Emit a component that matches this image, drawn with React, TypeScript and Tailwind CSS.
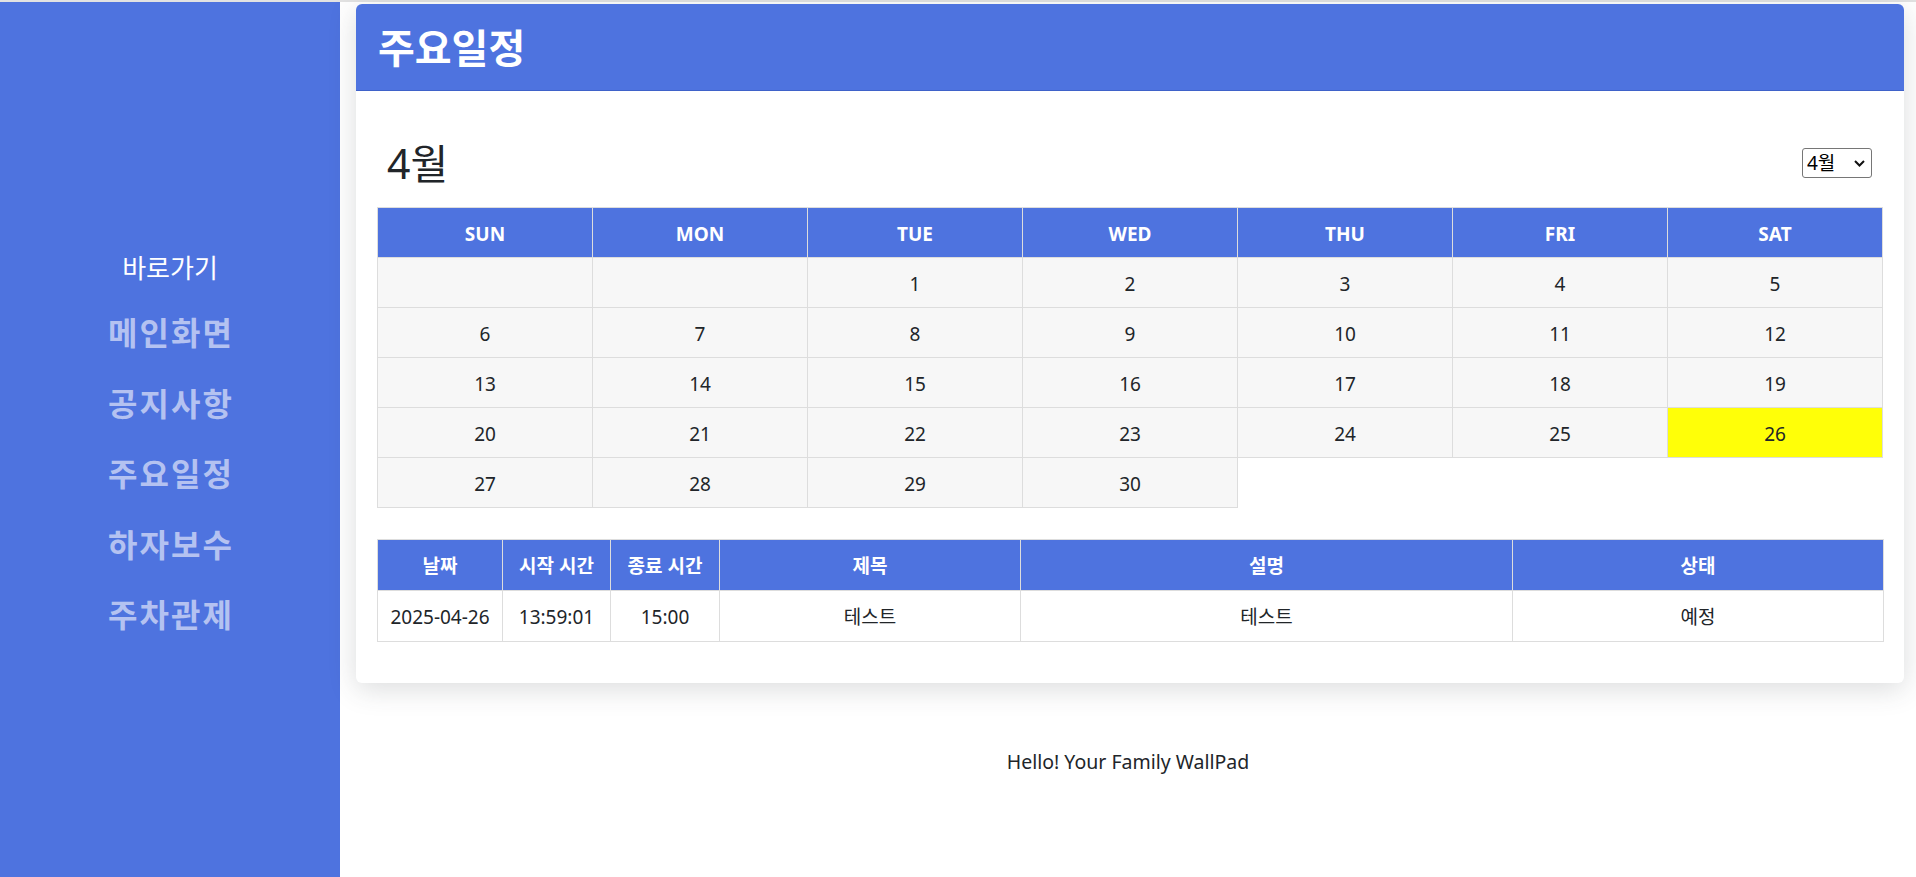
import React from "react";

const weeks: (number | null)[][] = [
  [null, null, 1, 2, 3, 4, 5],
  [6, 7, 8, 9, 10, 11, 12],
  [13, 14, 15, 16, 17, 18, 19],
  [20, 21, 22, 23, 24, 25, 26],
  [27, 28, 29, 30],
];

const days = ["SUN", "MON", "TUE", "WED", "THU", "FRI", "SAT"];

const menu = ["메인화면", "공지사항", "주요일정", "하자보수", "주차관제"];

export default function App() {
  return (
    <div
      className="w-[1916px] h-[877px] bg-white text-[#212529] overflow-hidden flex flex-col"
      style={{ fontFamily: '"Noto Sans", "Noto Sans CJK KR", sans-serif' }}
    >
      <div className="h-[2px] w-full bg-[#e2e2e2] shrink-0" />
      <div className="flex flex-1 min-h-0">
        {/* Sidebar */}
        <aside className="w-[340px] shrink-0 bg-[#4e73df] flex flex-col items-center pt-[251px]">
          <div className="h-[30px] flex items-center text-white text-[26px] leading-none">
            바로가기
          </div>
          <nav className="mt-[15px] flex flex-col items-center">
            {menu.map((m) => (
              <div
                key={m}
                className="h-[70.5px] flex items-center text-[32px] font-bold text-[#b4c2f1] tracking-[2px] leading-none pl-[2px]"
              >
                {m}
              </div>
            ))}
          </nav>
        </aside>

        {/* Main */}
        <main className="flex-1 flex flex-col">
          <section className="ml-[16px] mt-[2px] w-[1548px] bg-white rounded-[6px] shadow-[0_6px_28px_rgba(58,59,69,0.18)]">
            <header className="h-[87px] bg-[#4e73df] rounded-t-[6px] border-b border-[#3f62c9] flex items-center pl-[22px]">
              <h1 className="text-white text-[40px] font-bold leading-none pt-[2px]">주요일정</h1>
            </header>
            <div className="px-[21px] pt-[42px] pb-[41px]">
              <div className="h-[60px] flex items-center justify-between">
                <h2 className="text-[41px] leading-none pl-[10px] text-[#212529]">4월</h2>
                <div className="relative mr-[11px]">
                  <select
                    defaultValue="4"
                    className="appearance-none w-[70px] h-[30px] border border-[#767676] rounded-[3px] bg-white text-[19px] leading-none pl-[4px] text-black"
                  >
                    <option value="4">4월</option>
                  </select>
                  <svg
                    className="absolute right-[7px] top-[12px] pointer-events-none"
                    width="11"
                    height="7"
                    viewBox="0 0 11 7"
                    fill="none"
                  >
                    <path d="M1 1l4.5 4.5L10 1" stroke="#111" strokeWidth="2" />
                  </svg>
                </div>
              </div>

              <table className="mt-[14px] w-[1506px] table-fixed border-collapse">
                <thead>
                  <tr>
                    {days.map((d) => (
                      <th
                        key={d}
                        className="h-[50px] p-0 pt-[3px] bg-[#4e73df] text-white font-bold text-[19px] border border-[#dddddd]"
                      >
                        {d}
                      </th>
                    ))}
                  </tr>
                </thead>
                <tbody>
                  {weeks.map((w, i) => (
                    <tr key={i}>
                      {w.map((n, j) => (
                        <td
                          key={j}
                          className={
                            "h-[50px] p-0 pt-[3px] text-center text-[19px] border border-[#dddddd] " +
                            (n === 26 ? "bg-[#ffff08]" : "bg-[#f7f7f7]")
                          }
                        >
                          {n ?? ""}
                        </td>
                      ))}
                    </tr>
                  ))}
                </tbody>
              </table>

              <table className="mt-[31px] w-[1506px] table-fixed border-collapse">
                <colgroup>
                  <col className="w-[125px]" />
                  <col className="w-[108px]" />
                  <col className="w-[109px]" />
                  <col className="w-[301px]" />
                  <col className="w-[492px]" />
                  <col className="w-[371px]" />
                </colgroup>
                <thead>
                  <tr>
                    {["날짜", "시작 시간", "종료 시간", "제목", "설명", "상태"].map((h) => (
                      <th
                        key={h}
                        className="h-[51px] p-0 pt-[2px] bg-[#4e73df] text-white font-bold text-[19px] border border-[#dddddd] whitespace-nowrap"
                      >
                        {h}
                      </th>
                    ))}
                  </tr>
                </thead>
                <tbody>
                  <tr>
                    {["2025-04-26", "13:59:01", "15:00", "테스트", "테스트", "예정"].map((c, i) => (
                      <td
                        key={i}
                        className="h-[51px] p-0 pt-[2px] text-center text-[19px] border border-[#dddddd] bg-white whitespace-nowrap"
                      >
                        {c}
                      </td>
                    ))}
                  </tr>
                </tbody>
              </table>
            </div>
          </section>

          <footer className="mt-[64px] h-[30px] flex items-center justify-center text-[19.5px] text-[#212529]">
            Hello! Your Family WallPad
          </footer>
        </main>
      </div>
    </div>
  );
}
